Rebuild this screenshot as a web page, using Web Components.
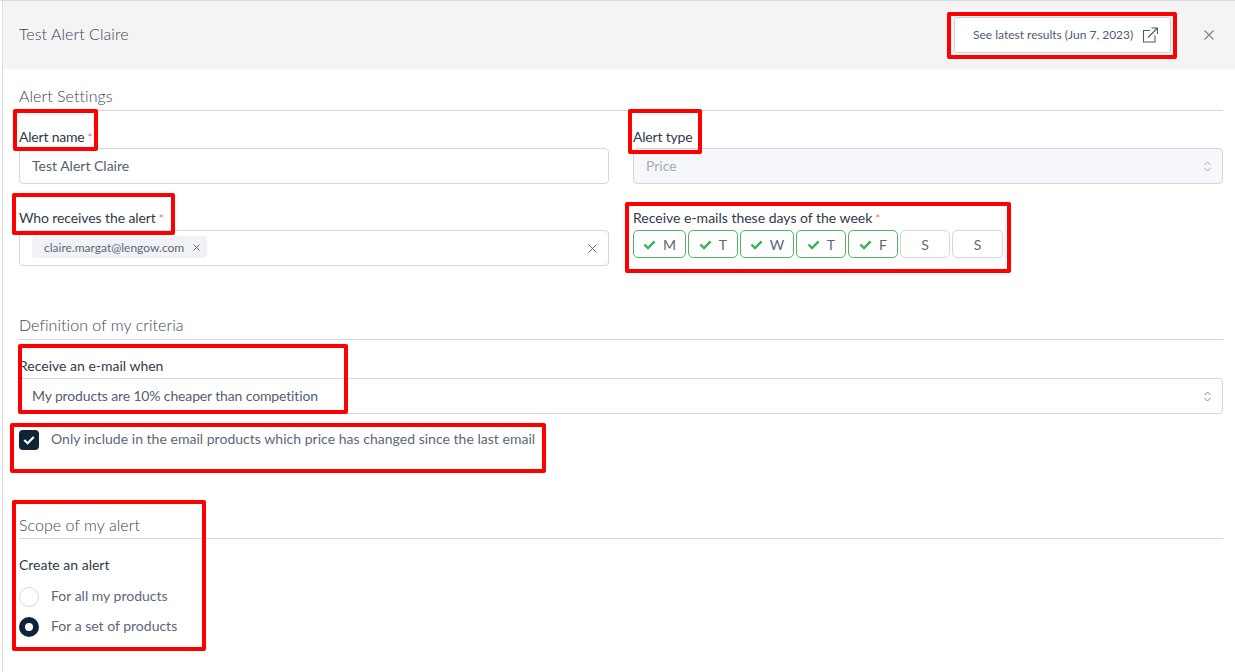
<!DOCTYPE html>
<html lang="en">
<head>
<meta charset="utf-8">
<title>Test Alert Claire</title>
<style>
  html, body { margin: 0; height: 100%; background: #fff; }
  body { box-sizing: border-box; border-top: 1px solid #dcdcdc; font-family: Lato, "Open Sans", sans-serif; font-size: 14px; color: #4a5568; overflow: hidden; }
</style>
</head>
<body>
<alert-panel>
  <panel-header slot="header" title-text="Test Alert Claire"></panel-header>

  <form-section heading="Alert Settings" style="height:229px">
    <div style="display:grid;grid-template-columns:590px 590px;column-gap:24px;row-gap:23px">
      <form-field label="Alert name" required style="--label-gap:0px;--label-track:-.2px"><select-box value="Test Alert Claire" kind="text"></select-box></form-field>
      <form-field label="Alert type" style="--label-gap:0px;--label-track:-.2px"><select-box value="Price" kind="select" disabled></select-box></form-field>
      <form-field label="Who receives the alert" required style="--label-track:-.1px"><select-box kind="tags"><mail-tag>claire.margat@lengow.com</mail-tag></select-box></form-field>
      <form-field label="Receive e-mails these days of the week" required>
        <div style="display:flex;gap:2px">
          <day-toggle on w="53">M</day-toggle>
          <day-toggle on w="50">T</day-toggle>
          <day-toggle on w="54">W</day-toggle>
          <day-toggle on w="50">T</day-toggle>
          <day-toggle on w="50">F</day-toggle>
          <day-toggle w="50">S</day-toggle>
          <day-toggle w="51">S</day-toggle>
        </div>
      </form-field>
    </div>
  </form-section>

  <form-section heading="Definition of my criteria" style="height:199px">
    <form-field label="Receive an e-mail when"><select-box value="My products are 10% cheaper than competition" kind="select" style="letter-spacing:-.14px"></select-box></form-field>
    <check-row checked style="margin-top:16px;letter-spacing:.025px">Only include in the email products which price has changed since the last email</check-row>
  </form-section>

  <form-section heading="Scope of my alert" style="--head-pad:17px">
    <form-field label="Create an alert">
      <div style="display:flex;flex-direction:column;gap:10px;margin-top:11px">
        <check-row radio>For all my products</check-row>
        <check-row radio checked>For a set of products</check-row>
      </div>
    </form-field>
  </form-section>
</alert-panel>

<red-mark x="947" y="12" w="230" h="47"></red-mark>
<red-mark x="13" y="109" w="85" h="42"></red-mark>
<red-mark x="628" y="109" w="74" h="45"></red-mark>
<red-mark x="12" y="193" w="163" h="42"></red-mark>
<red-mark x="625" y="202" w="386" h="71"></red-mark>
<red-mark x="18" y="344" w="330" h="70"></red-mark>
<red-mark x="10" y="423" w="536" h="50"></red-mark>
<red-mark x="12" y="500" w="194" h="151"></red-mark>

<script>
const CHECK_PATH = 'M1.5 7 L5.4 10.8 L12.5 3.6';

class AlertPanel extends HTMLElement {
  constructor() {
    super();
    this.attachShadow({ mode: 'open' });
    this.shadowRoot.innerHTML = `
      <style>
        :host { display: block; height: 671px; box-sizing: border-box; margin-left: 2px; border-left: 1px solid #dcdcdc; }
        main { padding: 0 12px 0 16px; }
      </style>
      <slot name="header"></slot>
      <main><slot></slot></main>`;
  }
}

class PanelHeader extends HTMLElement {
  constructor() {
    super();
    this.attachShadow({ mode: 'open' });
    this.shadowRoot.innerHTML = `
      <style>
        :host { display: flex; align-items: center; height: 68px; box-sizing: border-box; background: #f4f4f4; padding: 0 20px 0 16px; }
        h1 { flex: 1; margin: 0 0 4px; font-size: 16px; font-weight: 300; color: #3a4557; letter-spacing: .05px; }
        button { display: flex; align-items: center; width: 217px; height: 36px; box-sizing: border-box; margin-right: 32px; padding: 0 12px 0 18px; background: #fff; border: 1px solid #cdd3dc; border-radius: 3px; font: inherit; font-size: 12px; color: #4f5b70; }
        span { flex: 1; text-align: left; white-space: nowrap; margin-bottom: 2px; }
        svg { display: block; }
      </style>
      <h1>${this.getAttribute('title-text')}</h1>
      <button><span>See latest results (Jun 7, 2023)</span>
        <svg width="16" height="16" viewBox="0 0 16 16" fill="none" stroke="#4f5b70" stroke-width="1.1"><path d="M8 3.5H1.5V15H13V8.5"/><path d="M6 10.5L15 1.5M9.5 1H15.5V7"/></svg>
      </button>
      <svg width="12" height="12" viewBox="0 0 12 12" fill="none" stroke="#7d8796" stroke-width="1.2"><path d="M1.5 1.5L10.5 10.5M10.5 1.5L1.5 10.5"/></svg>`;
  }
}

class FormSection extends HTMLElement {
  constructor() {
    super();
    this.attachShadow({ mode: 'open' });
    this.shadowRoot.innerHTML = `
      <style>
        :host { display: block; }
        h2 { margin: 0 0 15px; height: 42px; box-sizing: border-box; padding-top: var(--head-pad, 16px); line-height: 22px; border-bottom: 1px solid #d3d8de; font-size: 16px; font-weight: 300; color: #3a4557; letter-spacing: .05px; }
      </style>
      <h2>${this.getAttribute('heading')}</h2>
      <slot></slot>`;
  }
}

class FormField extends HTMLElement {
  constructor() {
    super();
    this.attachShadow({ mode: 'open' });
    const star = this.hasAttribute('required') ? '<i>*</i>' : '';
    this.shadowRoot.innerHTML = `
      <style>
        :host { display: block; }
        label { display: block; height: 22px; line-height: 22px; margin-bottom: var(--label-gap, 1px); letter-spacing: var(--label-track, 0); color: #2f3a4c; font-size: 14px; white-space: nowrap; }
        i { font-style: normal; color: #f0717a; margin-left: 3px; font-size: 12px; }
      </style>
      <label>${this.getAttribute('label')}${star}</label>
      <slot></slot>`;
  }
}

class SelectBox extends HTMLElement {
  constructor() {
    super();
    this.attachShadow({ mode: 'open' });
    const kind = this.getAttribute('kind');
    const disabled = this.hasAttribute('disabled');
    const value = this.getAttribute('value') || '';
    let tail = '';
    if (kind === 'select') {
      tail = `<svg width="7" height="11" viewBox="0 0 7 11" fill="none" stroke="${disabled ? '#a4acb8' : '#7d8796'}" stroke-width="1"><path d="M.5 4L3.5 1L6.5 4M.5 7L3.5 10L6.5 7"/></svg>`;
    } else if (kind === 'tags') {
      tail = `<svg width="9" height="9" viewBox="0 0 9 9" fill="none" stroke="#5c6779" stroke-width="1"><path d="M.5.5L8.5 8.5M8.5.5L.5 8.5"/></svg>`;
    }
    this.shadowRoot.innerHTML = `
      <style>
        :host { display: flex; align-items: center; height: 36px; box-sizing: border-box; padding: 0 11px 0 12px; border: 1px solid #d3d8de; border-radius: 4px; background: ${disabled ? '#f5f7fa' : '#fff'}; color: ${disabled ? '#a4acb8' : '#55606f'}; font-size: 14px; }
        div { flex: 1; white-space: nowrap; margin-bottom: 2px; }
      </style>
      <div>${value}<slot></slot></div>${tail}`;
  }
}

class MailTag extends HTMLElement {
  constructor() {
    super();
    this.attachShadow({ mode: 'open' });
    this.shadowRoot.innerHTML = `
      <style>
        :host { display: inline-flex; align-items: center; height: 22px; box-sizing: border-box; padding: 0 7px 0 12px; background: #f0f2f5; border-radius: 4px; font-size: 12px; color: #5c6779; }
        svg { margin-left: 9px; }
      </style>
      <slot></slot>
      <svg width="7" height="7" viewBox="0 0 7 7" fill="none" stroke="#5c6779" stroke-width="1"><path d="M.5.5L6.5 6.5M6.5.5L.5 6.5"/></svg>`;
  }
}

class DayToggle extends HTMLElement {
  constructor() {
    super();
    this.attachShadow({ mode: 'open' });
    const on = this.hasAttribute('on');
    this.shadowRoot.innerHTML = `
      <style>
        :host { display: flex; align-items: center; justify-content: center; gap: 7px; width: ${this.getAttribute('w')}px; height: 28px; box-sizing: border-box; border: 1px solid ${on ? '#4cb963' : '#d3d8de'}; border-radius: 5px; font-size: 14px; color: #5c6779; }
      </style>
      ${on ? `<svg width="13" height="13" viewBox="0 0 14 14" fill="none" stroke="#37b556" stroke-width="2.6"><path d="${CHECK_PATH}"/></svg>` : ''}
      <slot></slot>`;
  }
}

class CheckRow extends HTMLElement {
  constructor() {
    super();
    this.attachShadow({ mode: 'open' });
    const radio = this.hasAttribute('radio');
    const checked = this.hasAttribute('checked');
    let box;
    if (radio) {
      box = checked
        ? '<b style="border-radius:50%;background:#0f2438"><u style="width:8px;height:8px;border-radius:50%;background:#fff"></u></b>'
        : '<b style="border-radius:50%;background:#fff;border:1px solid #d3d8de"></b>';
    } else {
      box = `<b style="border-radius:4px;background:#0f2438"><svg width="12" height="12" viewBox="0 0 14 14" fill="none" stroke="#fff" stroke-width="2.6"><path d="${CHECK_PATH}"/></svg></b>`;
    }
    this.shadowRoot.innerHTML = `
      <style>
        :host { display: flex; align-items: flex-start; gap: 12px; height: 20px; font-size: 14px; color: #5c6779; white-space: nowrap; }
        b { display: flex; align-items: center; justify-content: center; width: 20px; height: 20px; box-sizing: border-box; flex: none; }
        u { display: block; }
        span { line-height: 17px; }
      </style>
      ${box}<span><slot></slot></span>`;
  }
}

// the red rectangles are annotations lying over the form
class RedMark extends HTMLElement {
  constructor() {
    super();
    this.attachShadow({ mode: 'open' });
    const a = n => this.getAttribute(n);
    this.shadowRoot.innerHTML = `
      <style>
        :host { position: absolute; left: ${a('x')}px; top: ${a('y')}px; width: ${a('w')}px; height: ${a('h')}px; box-sizing: border-box; border: 4px solid #f00; border-radius: 2px; pointer-events: none; }
      </style>`;
  }
}

customElements.define('alert-panel', AlertPanel);
customElements.define('panel-header', PanelHeader);
customElements.define('form-section', FormSection);
customElements.define('form-field', FormField);
customElements.define('select-box', SelectBox);
customElements.define('mail-tag', MailTag);
customElements.define('day-toggle', DayToggle);
customElements.define('check-row', CheckRow);
customElements.define('red-mark', RedMark);
</script>
</body>
</html>
